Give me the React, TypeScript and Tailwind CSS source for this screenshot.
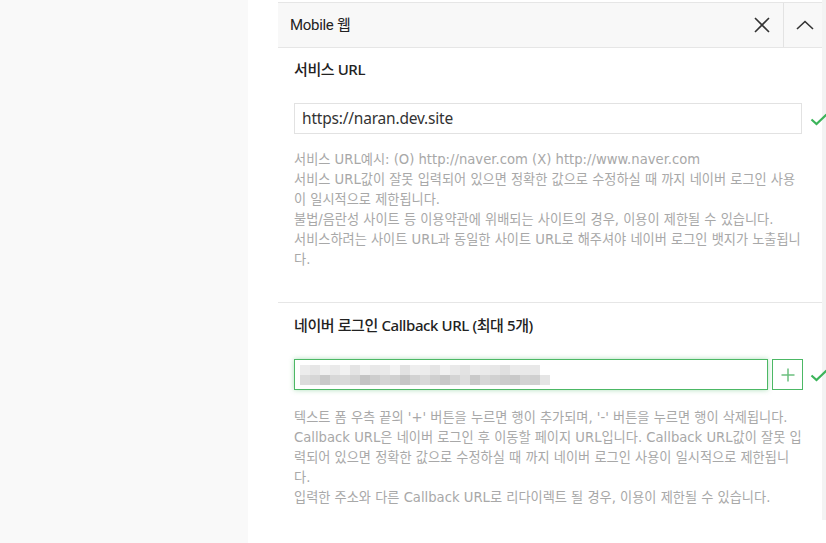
const mosaicTop = ["#ececec","#e6e6e6","#f0f0f0","#eaeaea","#f2f2f2","#e4e4e4","#efefef","#e8e8e8","#eaeaea","#f3f3f3","#e2e2e2","#eeeeee","#ececec","#e5e5e5","#f1f1f1","#e9e9e9","#e3e3e3","#ededed","#eaeaea","#e7e7e7","#e0e0e0","#ebebeb","#e9e9e9","#e8e8e8","#ffffff"];
const mosaicBottom = ["#dcdcdc","#d6d6d6","#c9c9c9","#d8d8d8","#dadada","#d3d3d3","#c4c4c4","#cdcdcd","#d5d5d5","#d0d0d0","#c6c6c6","#d2d2d2","#d9d9d9","#cfcfcf","#c8c8c8","#d4d4d4","#dedede","#cacaca","#d7d7d7","#d1d1d1","#cccccc","#c9c9c9","#d3d3d3","#d0d0d0","#e5e5e5"];

function Check() {
  return (
    <svg width="18" height="14" viewBox="0 0 18 14" className="relative z-10 shrink-0">
      <path d="M1.5 7.5 L6.5 12 L16.5 2.5" fill="none" stroke="#3cb45a" strokeWidth="2.2" />
    </svg>
  );
}

function Help({ lines }: { lines: string[] }) {
  return (
    <div className="text-[13.2px] leading-[20px] text-[#a8a8a8] whitespace-nowrap" style={{ fontFamily: '"DejaVu Sans", "Noto Sans CJK KR", sans-serif' }}>
      {lines.map((l, i) => (
        <p key={i}>{l}</p>
      ))}
    </div>
  );
}

export default function App() {
  return (
    <div className="w-[826px] h-[543px] overflow-hidden flex bg-white" style={{ fontFamily: '"Noto Sans", "Noto Sans CJK KR", sans-serif' }}>
      <div className="w-[248px] shrink-0 bg-[#f9f9f9]" />
      <div className="w-[30px] shrink-0" />
      <div className="relative w-[548px] shrink-0 pt-[2px]">
        <div className="absolute right-0 top-0 w-[4px] h-[520px] bg-[#f3f3f3]" />

        <div className="h-[46px] flex items-center bg-[#f8f8f8] border-t border-b border-[#e6e6e6]">
          <span className="flex-1 pl-[12px] text-[15px] text-[#222] tracking-[-0.3px]" style={{ fontFamily: 'Roboto, "Noto Sans CJK KR", sans-serif' }}>Mobile 웹</span>
          <div className="w-[42px] h-full flex items-center justify-center">
            <svg width="16" height="16" viewBox="0 0 16 16">
              <path d="M1 1 L15 15 M15 1 L1 15" stroke="#333" strokeWidth="1.6" fill="none" />
            </svg>
          </div>
          <div className="w-[1px] h-full bg-[#e3e3e3]" />
          <div className="w-[42px] h-full flex items-center justify-center">
            <svg width="18" height="10" viewBox="0 0 18 10">
              <path d="M1 9 L9 1.5 L17 9" stroke="#333" strokeWidth="1.6" fill="none" />
            </svg>
          </div>
        </div>

        <section className="pl-[16px] pt-[10px] pb-[32px]">
          <h2 className="text-[15px] font-medium text-[#222] tracking-[-0.4px] leading-[22px]">서비스 URL</h2>
          <div className="mt-[23px] flex items-center gap-[8px]">
            <div className="w-[508px] shrink-0 h-[31px] border border-[#e2e2e2] flex items-center px-[7px] text-[15.5px] text-[#333] tracking-[-0.2px]">https://naran.dev.site</div>
            <Check />
          </div>
          <div className="mt-[16px]">
            <Help
              lines={[
                "서비스 URL예시: (O) http://naver.com (X) http://www.naver.com",
                "서비스 URL값이 잘못 입력되어 있으면 정확한 값으로 수정하실 때 까지 네이버 로그인 사용",
                "이 일시적으로 제한됩니다.",
                "불법/음란성 사이트 등 이용약관에 위배되는 사이트의 경우, 이용이 제한될 수 있습니다.",
                "서비스하려는 사이트 URL과 동일한 사이트 URL로 해주셔야 네이버 로그인 뱃지가 노출됩니",
                "다.",
              ]}
            />
          </div>
        </section>

        <div className="h-[1px] bg-[#e6e6e6] mr-[4px]" />

        <section className="pl-[16px] pt-[11px]">
          <h2 className="text-[15px] font-medium text-[#222] tracking-[-0.4px] leading-[22px]">네이버 로그인 Callback URL (최대 5개)</h2>
          <div className="mt-[23px] flex items-center">
            <div className="w-[474px] shrink-0 h-[31px] border border-[#4cb865] shadow-[0_0_5px_rgba(76,184,101,0.45)] flex items-center px-[5px]">
              <div className="flex flex-col">
                <div className="flex">
                  {mosaicTop.map((c, i) => (
                    <div key={i} className="w-[10px] h-[10px]" style={{ background: c }} />
                  ))}
                </div>
                <div className="flex">
                  {mosaicBottom.map((c, i) => (
                    <div key={i} className="w-[10px] h-[10px]" style={{ background: c }} />
                  ))}
                </div>
              </div>
            </div>
            <div className="ml-[4px] shrink-0 w-[31px] h-[31px] border border-[#4cb865] flex items-center justify-center">
              <svg width="14" height="14" viewBox="0 0 14 14">
                <path d="M7 0.5 V13.5 M0.5 7 H13.5" stroke="#6cc07f" strokeWidth="1.5" fill="none" />
              </svg>
            </div>
            <div className="ml-[7px] shrink-0">
              <Check />
            </div>
          </div>
          <div className="mt-[18px]">
            <Help
              lines={[
                "텍스트 폼 우측 끝의 '+' 버튼을 누르면 행이 추가되며, '-' 버튼을 누르면 행이 삭제됩니다.",
                "Callback URL은 네이버 로그인 후 이동할 페이지 URL입니다. Callback URL값이 잘못 입",
                "력되어 있으면 정확한 값으로 수정하실 때 까지 네이버 로그인 사용이 일시적으로 제한됩니",
                "다.",
                "입력한 주소와 다른 Callback URL로 리다이렉트 될 경우, 이용이 제한될 수 있습니다.",
              ]}
            />
          </div>
        </section>
      </div>
    </div>
  );
}
